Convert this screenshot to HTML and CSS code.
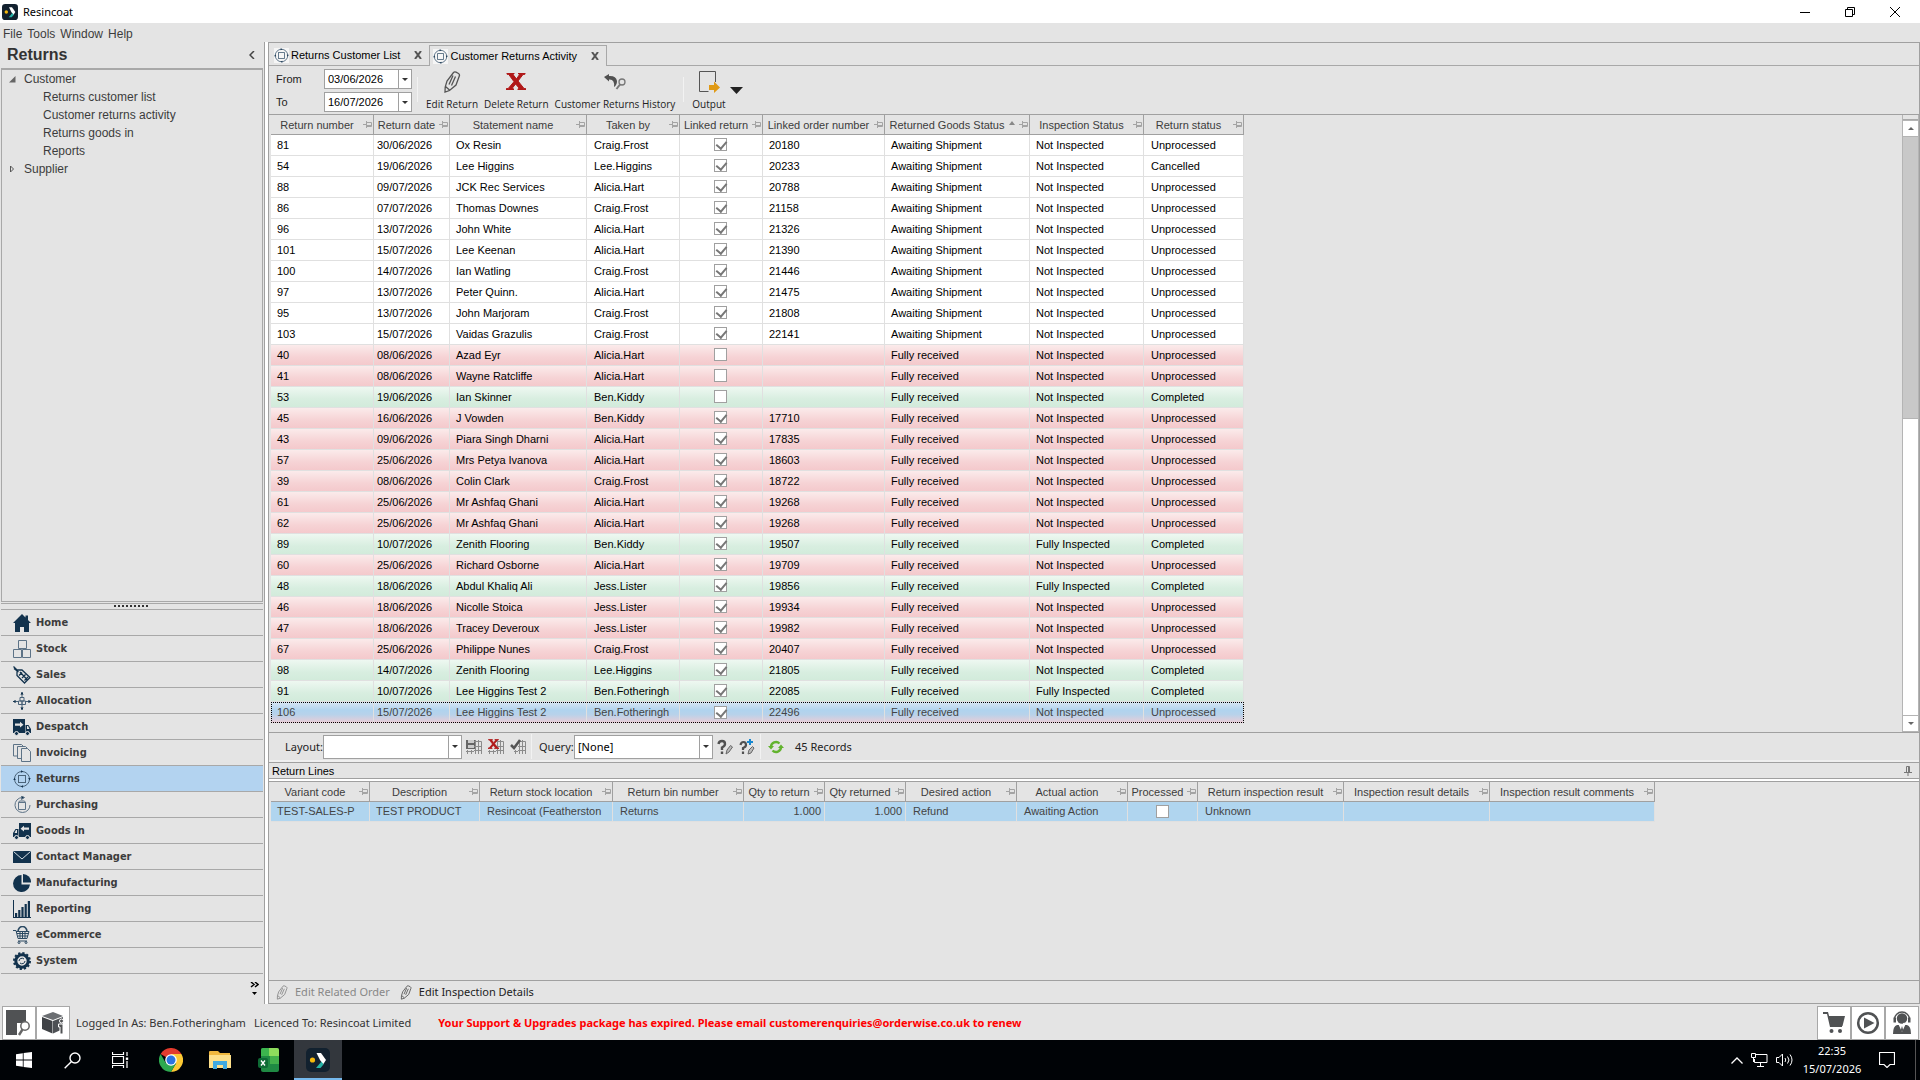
FILE: index.html
```html
<!DOCTYPE html>
<html lang="en">
<head>
<meta charset="utf-8">
<title>Resincoat</title>
<link rel="stylesheet" href="styles.css">
</head>
<body>
<svg class="sprite" aria-hidden="true">
  <symbol id="app" viewBox="0 0 24 24"><rect width="24" height="24" rx="5" fill="#12212f"/><circle cx="6.500" cy="12" r="2.600" fill="#f5b90c"/><path d="M10.500 5h4.500l5 7-3 4.500-3-4.500z" fill="#fff"/><path d="M15.500 13.500l2 3-3 3.500h-4.500z" fill="#26b4a8"/></symbol>
  <symbol id="pin" viewBox="0 0 9 7"><path d="M0 3.500h3M3.500 0v7M4 1.500h4.500v4H4M4 4.500h4.500" fill="none" stroke="#a4a4a4"/></symbol>
  <symbol id="returns" viewBox="0 0 18 18"><g fill="none" stroke="#4a6379"><circle cx="9" cy="9" r="7.500"/><rect x="5.500" y="5.500" width="7" height="7"/></g><path d="M8 .3l2.200 1.200L8 2.800zM10 17.700l-2.200-1.200L10 15.200zM.3 10l1.200-2.200L2.800 10zM17.700 8l-1.200 2.200L15.200 8z" fill="#12324d"/></symbol>
  <symbol id="pencil" viewBox="0 0 18 22"><path d="M10.500 1.500q1-1 2.500-.3l2.500 1.300q1.300.8.900 2.300L13 14 6.500 19.500 2 21l.2-5L4 10zM2.500 15.500l4 3.500M6 13.500l4-9M8.500 14.500l4-9" fill="none" stroke="currentColor" stroke-width="1.300"/></symbol>
  <symbol id="cross" viewBox="0 0 20 17"><path d="M1 0h7v1l-1.200.3L10.500 6l3.200-4.700L12.500 1V0H19v1.200l-2 .3-5 6.500 6 7.500 2 .3V17h-8v-1.200l1.500-.3L9.600 11 6 15.500l1.500.3V17H0v-1.200l2.200-.3L8 8.700 2.800 1.500 1 1.200z" fill="#b01818" stroke="#b01818"/></symbol>
  <symbol id="grid" viewBox="0 0 8 16"><path d="M0 2.500h7.500V15M1.500 1v14M4.500 1v14M0 7.500h7.500M0 11.500h7.500" stroke="#8b8b8b" fill="none"/></symbol>
</svg>

<header class="titlebar">
  <svg class="i16"><use href="#app"/></svg>
  <span class="grow">Resincoat</span>
  <button class="win" aria-label="Minimise"><svg width="10" height="10"><path d="M0 5.500h10" stroke="#000"/></svg></button>
  <button class="win" aria-label="Restore"><svg width="10" height="10"><path d="M.5 2.500h7v7h-7zM2.500 2V.5h7v7H8" stroke="#000" fill="none"/></svg></button>
  <button class="win" aria-label="Close"><svg width="10" height="10"><path d="M0 0l10 10M10 0L0 10" stroke="#000"/></svg></button>
</header>
<nav class="menubar"><a href="#">File</a><a href="#">Tools</a><a href="#">Window</a><a href="#">Help</a></nav>

<div class="workspace">
  <aside class="side">
    <div class="side-head"><h1>Returns</h1><button aria-label="Collapse panel"><svg width="6" height="8"><path d="M5 0L1 4l4 4" fill="none" stroke="#444" stroke-width="1.500"/></svg></button></div>
    <div class="tree">
      <a href="#" class="node"><svg width="7" height="7"><path d="M6.500 0v6.500H0z" fill="#666"/></svg>Customer</a>
      <a href="#" class="leaf">Returns customer list</a>
      <a href="#" class="leaf">Customer returns activity</a>
      <a href="#" class="leaf">Returns goods in</a>
      <a href="#" class="leaf">Reports</a>
      <a href="#" class="node"><svg width="7" height="8"><path d="M1.500 1l3 3-3 3z" fill="none" stroke="#555"/></svg>Supplier</a>
    </div>
    <div class="grip"><i></i></div>
    <nav class="modules">
      <a href="#"><svg viewBox="0 0 18 18" fill="#12324d"><path d="M9 0l3.500 3.500V1.500H15V6l3 3h-2v9h-5v-5H7v5H2V9H0z"/></svg>Home</a>
      <a href="#"><svg viewBox="0 0 18 18" fill="none" stroke="#5d7387"><path d="M5.500.5h8v8h-8zM.5 9.500h8v8h-8zM9.500 9.500h8v8h-8z"/></svg>Stock</a>
      <a href="#"><svg viewBox="0 0 18 18" fill="none" stroke="#12324d" stroke-width="1.300"><path d="M.5.500L4 4M4 4h5l8 7.500-5.500 5.500L4 9.500zM1 2.500L5.500 6M7 6l7 7.500M6 9.500l3-3M9 12l3.500-3.500M11.500 14.500l3.500-3.500"/></svg>Sales</a>
      <a href="#"><svg viewBox="0 0 18 18" fill="none" stroke="#4a6379"><path d="M9 0v5M9 13v5M0 9.500h5M13 9.500h5M7 5.500h4v3.500H7zM5.500 9h3.500v3.500H5.500zM9 9h3.500v3.500H9z"/><path d="M8 2.500l1-2 1 2M8 15.500l1 2 1-2M2.500 8.500l-2 1 2 1M15.500 8.500l2 1-2 1" fill="#12324d" stroke="#12324d"/></svg>Allocation</a>
      <a href="#"><svg viewBox="0 0 18 18"><path d="M0 1h12v14H0zM12.500 7h3l2.500 4v4h-5.500z" fill="#12324d"/><g fill="#12324d" stroke="#e4e4e4"><circle cx="3.500" cy="15.500" r="2"/><circle cx="14.500" cy="15.500" r="2"/></g><path d="M2 5.500h5V3.800L10.500 6.700 7 9.500V7.800H2zM14 8h1l1.500 3H14z" fill="#e4e4e4"/></svg>Despatch</a>
      <a href="#"><svg viewBox="0 0 18 18" fill="#e4e4e4" stroke="#5d7387"><path d="M.5.500h8l2 2V12H.5z"/><path d="M4.500 2.500h8l2 2V14.500h-10z"/><path d="M8.500 4.500h6l3 3v10h-9z"/></svg>Invoicing</a>
      <a href="#" class="on"><svg><use href="#returns"/></svg>Returns</a>
      <a href="#"><svg viewBox="0 0 18 18" fill="none" stroke="#5d7387"><path d="M9 1.500A7.500 7.500 0 1 0 17 9M5.500 6.500h7v7h-7zM5.500 6.500l1-1.500h5l1 1.500"/><path d="M8.500 0l3 1.500-3 2z" fill="#12324d"/></svg>Purchasing</a>
      <a href="#"><svg viewBox="0 0 18 18"><path d="M6 1h12v14H6zM5.500 7h-3L0 11v4h5.500z" fill="#12324d"/><g fill="#12324d" stroke="#e4e4e4"><circle cx="14.500" cy="15.500" r="2"/><circle cx="3.500" cy="15.500" r="2"/></g><path d="M16 5.500h-5V3.800L7.500 6.700 11 9.500V7.800h5zM4 8H3l-1.500 3H4z" fill="#e4e4e4"/></svg>Goods In</a>
      <a href="#"><svg viewBox="0 0 18 18"><path d="M0 3h18v12H0z" fill="#12324d"/><path d="M.5 3.500L9 11l8.500-7.500" fill="none" stroke="#d5dde3"/></svg>Contact Manager</a>
      <a href="#"><svg viewBox="0 0 18 18" fill="#12324d"><path d="M8.500 1A8.500 8.500 0 1 0 17 10.500H8.500z"/><path d="M10 0a8 8 0 0 1 8 8.500h-8z"/></svg>Manufacturing</a>
      <a href="#"><svg viewBox="0 0 18 18" fill="#12324d"><path d="M0 0h1v17h17v1H0zM2 13h2.200v4H2zM5.200 10h2.200v7H5.200zM8.400 7h2.200v10H8.400zM11.600 4h2.200v13h-2.200zM14.800 1H17v16h-2.200z"/></svg>Reporting</a>
      <a href="#"><svg viewBox="0 0 18 18" fill="none" stroke="#2c4a63"><path d="M0 4.500h3l2 8h9l2-7H3M4 7.500h11.500M4.500 10h10.500M7 5.500v7M9.500 5.500v7M12 5.500v7M5 15h9"/><path d="M5 5Q6 .5 9.500.500T14 5" stroke-width="1.600"/><circle cx="6" cy="16.500" r="1"/><circle cx="13" cy="16.500" r="1"/></svg>eCommerce</a>
      <a href="#"><svg viewBox="0 0 18 18" fill="none" stroke="#12324d"><circle cx="9" cy="9" r="6.200" stroke-width="3"/><circle cx="9" cy="9" r="8" stroke-width="2" stroke-dasharray="2.200 2"/><path d="M6 9a3 3 0 0 1 5-2M12 9a3 3 0 0 1-5 2"/></svg>System</a>
    </nav>
    <button class="more" aria-label="Configure buttons"><svg width="9" height="14"><path d="M1 0l3 2.500L1 5M5 0l3 2.500L5 5" fill="none" stroke="#000" stroke-width="1.500"/><path d="M2 10h5l-2.500 3z"/></svg></button>
  </aside>

  <main class="main">
    <div class="tabs">
      <div class="tab"><svg class="ticon"><use href="#returns" width="15" height="15"/></svg><a href="#">Returns Customer List</a><button aria-label="Close tab"><svg width="8" height="8"><path d="M1 0l6 8M7 0L1 8" stroke="#555" stroke-width="2"/></svg></button></div>
      <div class="tab active"><svg class="ticon"><use href="#returns" width="15" height="15"/></svg><a href="#">Customer Returns Activity</a><button aria-label="Close tab"><svg width="8" height="8"><path d="M1 0l6 8M7 0L1 8" stroke="#555" stroke-width="2"/></svg></button></div>
      <div class="tabfill"></div>
    </div>
    <div class="toolbar">
      <div class="dates">
        <label for="from">From</label><span class="combo"><input id="from" value="03/06/2026"><button aria-label="Pick from date"></button></span>
        <label for="to">To</label><span class="combo"><input id="to" value="16/07/2026"><button aria-label="Pick to date"></button></span>
      </div>
      <i class="sep"></i>
      <button class="tool"><svg width="18" height="22"><use href="#pencil"/></svg>Edit Return</button>
      <button class="tool"><svg width="20" height="22" viewBox="0 -2 20 22"><use href="#cross" width="20" height="17"/></svg>Delete Return</button>
      <button class="tool"><svg width="22" height="22" viewBox="0 0 22 22"><path d="M0 6l5-3v2q7-.5 8 5 0 4-3 6 1-8-5-7.500v2z" fill="#505050"/><circle cx="18" cy="11" r="3" fill="none" stroke="#777" stroke-width="1.300"/><path d="M16 13.500L12.500 18" stroke="#777" stroke-width="2"/></svg>Customer Returns History</button>
      <i class="sep"></i>
      <button class="tool"><svg width="22" height="22" viewBox="0 0 22 22"><path d="M17.500 11V.5h-16v20h9" fill="none" stroke="#555"/><path d="M11 14h5v-3.500l6 6L16 22v-3h-5z" fill="#e09a16"/></svg>Output</button>
      <button class="drop" aria-label="Output options"><svg width="13" height="7"><path d="M0 0h13L6.500 7z" fill="#222"/></svg></button>
    </div>

    <div class="gridwrap">
      <div class="gridbox">
      <table class="grid">
        <colgroup><col class="w103"><col class="w76"><col class="w137"><col class="w93"><col class="w83"><col class="w122"><col class="w145"><col class="w114"><col class="w100"></colgroup>
        <thead><tr>
          <th><div><span>Return number</span><svg><use href="#pin"/></svg></div></th><th><div><span>Return date</span><svg><use href="#pin"/></svg></div></th><th><div><span>Statement name</span><svg><use href="#pin"/></svg></div></th><th><div><span>Taken by</span><svg><use href="#pin"/></svg></div></th><th><div><span>Linked return</span><svg><use href="#pin"/></svg></div></th><th><div><span>Linked order number</span><svg><use href="#pin"/></svg></div></th><th><div><span>Returned Goods Status</span><i class="sort"></i><svg><use href="#pin"/></svg></div></th><th><div><span>Inspection Status</span><svg><use href="#pin"/></svg></div></th><th><div><span>Return status</span><svg><use href="#pin"/></svg></div></th>
        </tr></thead>
        <tbody>
          <tr><td>81<td>30/06/2026<td>Ox Resin<td>Craig.Frost<td><input type="checkbox" aria-label="Linked return" checked><td>20180<td>Awaiting Shipment<td>Not Inspected<td>Unprocessed</tr>
          <tr><td>54<td>19/06/2026<td>Lee Higgins<td>Lee.Higgins<td><input type="checkbox" aria-label="Linked return" checked><td>20233<td>Awaiting Shipment<td>Not Inspected<td>Cancelled</tr>
          <tr><td>88<td>09/07/2026<td>JCK Rec Services<td>Alicia.Hart<td><input type="checkbox" aria-label="Linked return" checked><td>20788<td>Awaiting Shipment<td>Not Inspected<td>Unprocessed</tr>
          <tr><td>86<td>07/07/2026<td>Thomas Downes<td>Craig.Frost<td><input type="checkbox" aria-label="Linked return" checked><td>21158<td>Awaiting Shipment<td>Not Inspected<td>Unprocessed</tr>
          <tr><td>96<td>13/07/2026<td>John White<td>Alicia.Hart<td><input type="checkbox" aria-label="Linked return" checked><td>21326<td>Awaiting Shipment<td>Not Inspected<td>Unprocessed</tr>
          <tr><td>101<td>15/07/2026<td>Lee Keenan<td>Alicia.Hart<td><input type="checkbox" aria-label="Linked return" checked><td>21390<td>Awaiting Shipment<td>Not Inspected<td>Unprocessed</tr>
          <tr><td>100<td>14/07/2026<td>Ian Watling<td>Craig.Frost<td><input type="checkbox" aria-label="Linked return" checked><td>21446<td>Awaiting Shipment<td>Not Inspected<td>Unprocessed</tr>
          <tr><td>97<td>13/07/2026<td>Peter Quinn.<td>Alicia.Hart<td><input type="checkbox" aria-label="Linked return" checked><td>21475<td>Awaiting Shipment<td>Not Inspected<td>Unprocessed</tr>
          <tr><td>95<td>13/07/2026<td>John Marjoram<td>Craig.Frost<td><input type="checkbox" aria-label="Linked return" checked><td>21808<td>Awaiting Shipment<td>Not Inspected<td>Unprocessed</tr>
          <tr><td>103<td>15/07/2026<td>Vaidas Grazulis<td>Craig.Frost<td><input type="checkbox" aria-label="Linked return" checked><td>22141<td>Awaiting Shipment<td>Not Inspected<td>Unprocessed</tr>
          <tr class="red"><td>40<td>08/06/2026<td>Azad Eyr<td>Alicia.Hart<td><input type="checkbox" aria-label="Linked return"><td><td>Fully received<td>Not Inspected<td>Unprocessed</tr>
          <tr class="red"><td>41<td>08/06/2026<td>Wayne Ratcliffe<td>Alicia.Hart<td><input type="checkbox" aria-label="Linked return"><td><td>Fully received<td>Not Inspected<td>Unprocessed</tr>
          <tr class="green"><td>53<td>19/06/2026<td>Ian Skinner<td>Ben.Kiddy<td><input type="checkbox" aria-label="Linked return"><td><td>Fully received<td>Not Inspected<td>Completed</tr>
          <tr class="red"><td>45<td>16/06/2026<td>J Vowden<td>Ben.Kiddy<td><input type="checkbox" aria-label="Linked return" checked><td>17710<td>Fully received<td>Not Inspected<td>Unprocessed</tr>
          <tr class="red"><td>43<td>09/06/2026<td>Piara Singh Dharni<td>Alicia.Hart<td><input type="checkbox" aria-label="Linked return" checked><td>17835<td>Fully received<td>Not Inspected<td>Unprocessed</tr>
          <tr class="red"><td>57<td>25/06/2026<td>Mrs Petya Ivanova<td>Alicia.Hart<td><input type="checkbox" aria-label="Linked return" checked><td>18603<td>Fully received<td>Not Inspected<td>Unprocessed</tr>
          <tr class="red"><td>39<td>08/06/2026<td>Colin Clark<td>Craig.Frost<td><input type="checkbox" aria-label="Linked return" checked><td>18722<td>Fully received<td>Not Inspected<td>Unprocessed</tr>
          <tr class="red"><td>61<td>25/06/2026<td>Mr Ashfaq Ghani<td>Alicia.Hart<td><input type="checkbox" aria-label="Linked return" checked><td>19268<td>Fully received<td>Not Inspected<td>Unprocessed</tr>
          <tr class="red"><td>62<td>25/06/2026<td>Mr Ashfaq Ghani<td>Alicia.Hart<td><input type="checkbox" aria-label="Linked return" checked><td>19268<td>Fully received<td>Not Inspected<td>Unprocessed</tr>
          <tr class="green"><td>89<td>10/07/2026<td>Zenith Flooring<td>Ben.Kiddy<td><input type="checkbox" aria-label="Linked return" checked><td>19507<td>Fully received<td>Fully Inspected<td>Completed</tr>
          <tr class="red"><td>60<td>25/06/2026<td>Richard Osborne<td>Alicia.Hart<td><input type="checkbox" aria-label="Linked return" checked><td>19709<td>Fully received<td>Not Inspected<td>Unprocessed</tr>
          <tr class="green"><td>48<td>18/06/2026<td>Abdul Khaliq Ali<td>Jess.Lister<td><input type="checkbox" aria-label="Linked return" checked><td>19856<td>Fully received<td>Fully Inspected<td>Completed</tr>
          <tr class="red"><td>46<td>18/06/2026<td>Nicolle Stoica<td>Jess.Lister<td><input type="checkbox" aria-label="Linked return" checked><td>19934<td>Fully received<td>Not Inspected<td>Unprocessed</tr>
          <tr class="red"><td>47<td>18/06/2026<td>Tracey Deveroux<td>Jess.Lister<td><input type="checkbox" aria-label="Linked return" checked><td>19982<td>Fully received<td>Not Inspected<td>Unprocessed</tr>
          <tr class="red"><td>67<td>25/06/2026<td>Philippe Nunes<td>Craig.Frost<td><input type="checkbox" aria-label="Linked return" checked><td>20407<td>Fully received<td>Not Inspected<td>Unprocessed</tr>
          <tr class="green"><td>98<td>14/07/2026<td>Zenith Flooring<td>Lee.Higgins<td><input type="checkbox" aria-label="Linked return" checked><td>21805<td>Fully received<td>Not Inspected<td>Completed</tr>
          <tr class="green"><td>91<td>10/07/2026<td>Lee Higgins Test 2<td>Ben.Fotheringh<td><input type="checkbox" aria-label="Linked return" checked><td>22085<td>Fully received<td>Fully Inspected<td>Completed</tr>
          <tr class="sel"><td>106<td>15/07/2026<td>Lee Higgins Test 2<td>Ben.Fotheringh<td><input type="checkbox" aria-label="Linked return" checked><td>22496<td>Fully received<td>Not Inspected<td>Unprocessed</tr>
        </tbody>
      </table>
      </div>
      <div class="scroll"><i class="split"></i><button class="up" aria-label="Scroll up"></button><i class="track"></i><i class="thumb"></i><button class="down" aria-label="Scroll down"></button></div>
    </div>

    <div class="layoutbar">
      <label for="layout">Layout:</label><span class="pick"><select id="layout"><option></option></select></span>
      <button class="mini" aria-label="Save layout"><svg width="16" height="16"><path d="M0 1h10v9H0z" fill="#666"/><path d="M2 1h6v3H2zM2 6h6v3H2z" fill="#ccc"/><use href="#grid" x="8" width="8" height="16"/><path d="M1.500 11v4M5.500 11v4M0 12.500h8" stroke="#8b8b8b"/></svg></button>
      <button class="mini" aria-label="Delete layout"><svg width="16" height="16"><use href="#grid" x="8" width="8" height="16"/><use href="#cross" width="11" height="10"/><path d="M1.500 11v4M5.500 11v4M0 12.500h8" stroke="#8b8b8b"/></svg></button>
      <button class="mini" aria-label="Apply layout"><svg width="16" height="16"><use href="#grid" x="8" width="8" height="16"/><path d="M1 6l3 3 6-8" fill="none" stroke="#555" stroke-width="2.500"/><path d="M5.500 11v4M4 12.500h4" stroke="#8b8b8b"/></svg></button>
      <i class="sep"></i>
      <label for="query">Query:</label><span class="pick"><select id="query"><option>[None]</option></select></span>
      <button class="mini" aria-label="Edit query"><svg width="16" height="16"><path d="M1.500 5Q2 2 5 2t3 3q0 2-3 3.500V11M5 12.500v2.500" fill="none" stroke="#505050" stroke-width="2.400"/><path d="M9 15l1-4 3.500-4.500 2 1.500-3.500 5z" fill="#bbb" stroke="#666"/></svg></button>
      <button class="mini" aria-label="New query"><svg width="16" height="16"><path d="M1.500 6Q2 3 4.500 3T7 6q0 2-3 3V11M4 12.500v2.500" fill="none" stroke="#505050" stroke-width="2.200"/><path d="M9 15l1-4 3.500-3.500 1.500 1.500-3 5z" fill="#bbb" stroke="#666"/><path d="M11 0v6M8 3h6" stroke="#1787cf" stroke-width="2"/></svg></button>
      <i class="sep"></i>
      <button class="mini" aria-label="Refresh"><svg width="16" height="16" fill="none" stroke="#62b32e" stroke-width="2.400"><path d="M3 8a5 5 0 0 1 8.500-3.500M13 8a5 5 0 0 1-8.500 3.500"/><path d="M0 7h6L3 10.500zM10 9h6l-3-3.500z" fill="#62b32e" stroke="none"/></svg></button>
      <span class="count">45 Records</span>
    </div>

    <div class="lineshead"><h2>Return Lines</h2><button aria-label="Pin panel"><svg width="8" height="10"><path d="M2.500 6V.5h3V6M0 6.500h8M4 7v3M4.500 1v5" fill="none" stroke="#777"/></svg></button></div>
    <section class="lines">
      <table class="grid lower">
        <colgroup><col class="w99"><col class="w110"><col class="w133"><col class="w131"><col class="w81"><col class="w81"><col class="w111"><col class="w111"><col class="w70"><col class="w146"><col class="w146"><col class="w165"></colgroup>
        <thead><tr>
          <th><div><span>Variant code</span><svg><use href="#pin"/></svg></div></th><th><div><span>Description</span><svg><use href="#pin"/></svg></div></th><th><div><span>Return stock location</span><svg><use href="#pin"/></svg></div></th><th><div><span>Return bin number</span><svg><use href="#pin"/></svg></div></th><th><div><span>Qty to return</span><svg><use href="#pin"/></svg></div></th><th><div><span>Qty returned</span><svg><use href="#pin"/></svg></div></th><th><div><span>Desired action</span><svg><use href="#pin"/></svg></div></th><th><div><span>Actual action</span><svg><use href="#pin"/></svg></div></th><th><div><span>Processed</span><svg><use href="#pin"/></svg></div></th><th><div><span>Return inspection result</span><svg><use href="#pin"/></svg></div></th><th><div><span>Inspection result details</span><svg><use href="#pin"/></svg></div></th><th><div><span>Inspection result comments</span><svg><use href="#pin"/></svg></div></th>
        </tr></thead>
        <tbody><tr><td>TEST-SALES-P<td>TEST PRODUCT<td>Resincoat (Featherston<td>Returns<td class="num">1.000<td class="num">1.000<td>Refund<td>Awaiting Action<td class="mid"><input type="checkbox" aria-label="Processed"><td>Unknown<td><td></tr></tbody>
      </table>
    </section>
    <div class="editbar">
      <button disabled><svg width="12" height="15"><use href="#pencil"/></svg>Edit Related Order</button>
      <button><svg width="12" height="15"><use href="#pencil"/></svg>Edit Inspection Details</button>
    </div>
  </main>
</div>

<footer class="status">
  <button aria-label="Search document"><svg width="26" height="26"><path d="M0 0h20v13h-9v12H0z" fill="#505254"/><circle cx="19" cy="16" r="4.200" fill="#fff" stroke="#666" stroke-width="1.500"/><path d="M16.500 19.500L13 25" stroke="#666" stroke-width="2.400"/></svg></button>
  <button aria-label="Product information"><svg width="26" height="26"><path d="M2 6L13 2l10 4-10 4z" fill="#6b6e72"/><path d="M2 7l10.500 4v12.500L2 19z" fill="#3f4246"/><path d="M13 11l10-4v12l-10 4.500z" fill="#4d5054"/><path d="M18.500 14h4.500v10h-3v-7h-1.500z" fill="#505254" stroke="#fff"/><circle cx="21.500" cy="11" r="2" fill="#505254" stroke="#fff"/></svg></button>
  <span class="who">Logged In As: Ben.Fotheringham</span><span class="lic">Licenced To: Resincoat Limited</span>
  <strong>Your Support &amp; Upgrades package has expired. Please email customerenquiries@orderwise.co.uk to renew</strong>
  <button aria-label="Shop"><svg width="24" height="24"><path d="M1 3h4l3 13h12v-2H9.500L6 1H1z" fill="#505254"/><path d="M6.500 5H23l-2.500 10H9z" fill="#505254"/><circle cx="9.500" cy="20" r="2" fill="#505254"/><circle cx="18" cy="20" r="2" fill="#505254"/></svg></button>
  <button aria-label="Videos"><svg width="24" height="24"><circle cx="12" cy="12" r="9.800" fill="none" stroke="#505254" stroke-width="2.500"/><path d="M8 6.500l10.500 5.500L8 17.500z" fill="#505254"/></svg></button>
  <button aria-label="Support"><svg width="24" height="24"><path d="M3 23q0-8 4-9h10q4 1 4 9z" fill="#505254"/><path d="M8.500 13.500h7L12 21z" fill="#fff"/><path d="M12 15l1.200 4L12 21l-1.200-2z" fill="#505254"/><circle cx="12" cy="7.500" r="5.200" fill="#505254"/><path d="M4.500 8.500a7.500 7.500 0 0 1 15 0" fill="none" stroke="#505254" stroke-width="1.400"/><path d="M3.500 6.500h2.500v5h-2.500zM18 6.500h2.500v5h-2.500z" fill="#505254"/><path d="M18 10.500q-1 2-5 2" fill="none" stroke="#fff"/></svg></button>
</footer>

<div class="taskbar">
  <button aria-label="Start"><svg width="16" height="16" fill="#fff"><path d="M0 2.200L6.800 1.200V7.600H0zM7.600 1.100L16 0v7.600H7.600zM0 8.400h6.800v6.400L0 13.800zM7.600 8.400H16V16l-8.400-1.100z"/></svg></button>
  <button aria-label="Search"><svg width="17" height="17" fill="none" stroke="#fff" stroke-width="1.400"><circle cx="11" cy="6" r="5"/><path d="M7.500 9.500L.7 16.300"/></svg></button>
  <button aria-label="Task view"><svg width="17" height="16" fill="none" stroke="#fff" stroke-width="1.200"><path d="M.5 0v2.500h11V0M.5 4.500h11v7H.5zM.5 16v-2.500h11V16M15 0v4M15 9v7"/><rect x="13.800" y="5.500" width="2.400" height="2.400" fill="#fff" stroke="none"/></svg></button>
  <button class="app first" aria-label="Chrome"><svg width="24" height="24"><path d="M12 12L1.600 6A12 12 0 0 1 22.400 6z" fill="#e33b2e"/><path d="M12 6h10.400A12 12 0 0 1 12 24l5.200-9z" fill="#fcc934"/><path d="M6.800 15L1.600 6A12 12 0 0 0 12 24l5.200-9z" fill="#2da94f"/><circle cx="12" cy="12" r="5.800" fill="#fff"/><circle cx="12" cy="12" r="4.500" fill="#2b73e0"/></svg></button>
  <button class="app" aria-label="File Explorer"><svg width="22" height="20"><path d="M0 2q0-1 1-1h8l2 2h10v14H0z" fill="#f0b83e"/><path d="M0 5h22v13H0z" fill="#fde08a"/><path d="M4 11h14v8h-4v-4H8v4H4z" fill="#3fa9e0"/></svg></button>
  <button class="app" aria-label="Excel"><svg width="22" height="24"><path d="M3 2q0-2 2-2h14q2 0 2 2v20q0 2-2 2H5q-2 0-2-2z" fill="#1f8a43"/><path d="M11 0h8q2 0 2 2v6H11z" fill="#8edc5c"/><path d="M3 2q0-2 2-2h6v8H3z" fill="#3cb54e"/><path d="M12 8h9v8h-9z" fill="#43b04b"/><rect y="10" width="10" height="10" rx="2" fill="#0e6b35"/><path d="M3 12.500l4 5M7 12.500l-4 5" stroke="#fff" stroke-width="1.300"/></svg></button>
  <button class="app current" aria-label="Resincoat"><svg width="24" height="24"><use href="#app"/></svg></button>
  <span class="grow"></span>
  <div class="tray">
    <button aria-label="Show hidden icons"><svg width="12" height="7"><path d="M.5 6.500L6 1l5.500 5.500" fill="none" stroke="#fff" stroke-width="1.300"/></svg></button>
    <button aria-label="Network"><svg width="17" height="14" fill="none" stroke="#fff"><path d="M5 1.500h11v8H3.500V6M9.500 10v3M6 13.500h7M.5.500h4v4h-4zM2.500 5v4"/></svg></button>
    <button aria-label="Volume"><svg width="18" height="14" fill="none" stroke="#fff"><path d="M.5 4.500h2.500L6.500 1v12L3 9.500H.5zM9 5q1.500 2 0 4M11.500 3.500q3 3.500 0 7M14 1.500q4 5.500 0 11"/></svg></button>
  </div>
  <time>22:35<br>15/07/2026</time>
  <button class="note" aria-label="Notifications"><svg width="16" height="16"><path d="M.5.500h15v12h-4.500L8 15.500 5 12.500H.5z" fill="none" stroke="#fff" stroke-width="1.200"/></svg></button>
  <i class="peek"></i>
</div>
</body>
</html>
```
FILE: styles.css
```css
* { box-sizing: border-box; }
body { margin: 0; min-height: 100vh; display: flex; flex-direction: column; background: #e4e4e4; color: #3c3c3c; font: 11px/14px "Liberation Sans", Arial, sans-serif; }
button { border: 0; padding: 0; margin: 0; background: none; font: inherit; color: inherit; display: flex; align-items: center; justify-content: center; }
a { color: inherit; text-decoration: none; }
h1, h2 { margin: 0; font-weight: normal; }
i { display: block; }
svg { flex: none; display: block; }
.sprite { width: 0; height: 0; position: absolute; }
.grow { flex: 1; }

.titlebar { height: 23px; background: #fff; color: #000; display: flex; align-items: center; gap: 5px; padding: 0 5px 0 2px; font: 11px/16px "Noto Sans", sans-serif; }
.i16 { width: 16px; height: 16px; }
.win { width: 40px; height: 20px; }
.menubar { height: 19px; display: flex; gap: 5px; padding: 4px 3px 0; font-size: 12px; }

.workspace { flex: 1; display: flex; }
.side { width: 265px; flex: none; padding: 0 1px; border-right: 1px solid #a0a0a0; display: flex; flex-direction: column; }
.side-head { height: 26px; display: flex; align-items: center; justify-content: space-between; padding: 0 8px 0 6px; }
.side-head h1 { font-size: 16px; font-weight: bold; color: #333; }
.tree { flex: 1; border: 1px solid #a8a8a8; border-top-width: 2px; font-size: 12px; line-height: 18px; }
.tree a { display: flex; align-items: center; }
.tree .node { padding-left: 7px; gap: 8px; }
.tree .leaf { padding-left: 41px; }
.grip { margin-top: 1px; height: 6px; border-top: 1px solid #a8a8a8; display: flex; justify-content: center; align-items: flex-start; padding-top: 1px; }
.grip i { width: 36px; height: 2px; background: repeating-linear-gradient(90deg, #333 0 2px, transparent 2px 4px); }
.modules { font: bold 11px/16px "DejaVu Sans Condensed", "DejaVu Sans", sans-serif; border-bottom: 1px solid #a8a8a8; }
.modules a { height: 26px; border-top: 1px solid #a8a8a8; display: flex; align-items: center; gap: 5px; padding-left: 12px; }
.modules a.on { background: #b3d3f0; }
.modules svg { width: 18px; height: 18px; }
.more { height: 30px; justify-content: flex-end; padding: 0 4px 0; }

.main { flex: 1; min-width: 0; margin-left: 3px; border: 1px solid #a0a0a0; box-shadow: -3px 0 #fff; display: flex; flex-direction: column; }
.tabs { height: 23px; display: flex; padding-top: 2px; color: #000; }
.tab { display: flex; align-items: center; gap: 2px; padding: 0 7px 0 5px; border-bottom: 1px solid #a8a8a8; }
.tab a { padding-right: 12px; white-space: nowrap; }
.tab.active { border: 1px solid #a8a8a8; border-bottom: 0; padding-left: 3px; }
.ticon { width: 15px; height: 15px; background: #f6f6f6; }
.tabfill { flex: 1; border-bottom: 1px solid #a8a8a8; }

.toolbar { height: 48px; display: flex; align-items: flex-start; padding: 3px 7px 0; color: #222; }
.dates { display: grid; grid-template-columns: 48px 88px; row-gap: 3px; align-items: center; }
.combo { display: flex; height: 20px; background: #fff; border: 1px solid #a0a0a0; }
.combo input { flex: 1; min-width: 0; border: 0; padding: 0 3px; font: inherit; color: #000; background: none; }
.combo button { width: 13px; border-left: 1px solid #a0a0a0; }
.combo button::after, .pick::after { content: ""; border: 3px solid transparent; border-top: 3px solid #333; border-bottom: 0; }
.sep { width: 1px; height: 25px; background: #f2f2f2; }
.toolbar .sep { margin: 8px 5px 0; }
.tool { flex-direction: column; gap: 4px; padding: 2px 3px 0; font: 10px/14px "Open Sans", "Noto Sans", sans-serif; color: #222; white-space: nowrap; }
.tool svg, .editbar svg { color: #555; }
.toolbar .drop { margin: 18px 0 0 1px; }

.gridwrap { display: flex; border-top: 1px solid #a0a0a0; border-bottom: 1px solid #a0a0a0; }
.gridbox { flex: 1; min-width: 0; padding: 0 0 9px 2px; }
.grid { border-collapse: separate; border-spacing: 0; table-layout: fixed; width: 973px; }
.w103 { width: 103px; } .w76 { width: 76px; } .w137 { width: 137px; } .w93 { width: 93px; } .w83 { width: 83px; } .w122 { width: 122px; } .w145 { width: 145px; } .w114 { width: 114px; } .w100 { width: 100px; }
.w99 { width: 99px; } .w110 { width: 110px; } .w133 { width: 133px; } .w131 { width: 131px; } .w81 { width: 81px; } .w111 { width: 111px; } .w70 { width: 70px; } .w146 { width: 146px; } .w165 { width: 165px; }
.grid th { height: 20px; padding: 0; font-weight: normal; border-right: 1px solid #a0a0a0; border-bottom: 1px solid #a0a0a0; white-space: nowrap; }
.grid th div { display: flex; align-items: center; padding-right: 1px; }
.grid th span { flex: 1; text-align: center; }
.grid th svg { width: 9px; height: 7px; }
.sort { border: 3px solid transparent; border-bottom: 4px solid #888; border-top: 0; margin: 0 4px 3px 0; }
.grid td { height: 21px; padding: 0 0 1px 6px; color: #000; background: #fff; border-right: 1px solid #e0e0e0; border-bottom: 1px solid #e0e0e0; white-space: nowrap; overflow: hidden; }
.grid td:nth-child(2) { padding-left: 3px; }
.grid td:nth-child(4), .grid td:nth-child(9) { padding-left: 7px; }
.grid:not(.lower) td:nth-child(5), .grid td.mid { padding: 0 1px 1px 0; text-align: center; }
.grid .red td { background: linear-gradient(#fbebeb, #f6d3d5 60%, #f4c9cc); }
.grid .green td { background: linear-gradient(#eef8f1, #d8eee0 60%, #d2ebdb); }
.grid .sel td { color: #444; background: linear-gradient(#d9e6f3, #b0d3ee 40%, #b8d2ea 60%, #eccdd5); border-bottom: 0; }
.grid .sel { outline: 1px dotted #000; outline-offset: -1px; }
.grid input { appearance: none; display: block; width: 13px; height: 13px; margin: 0 auto; border: 1px solid #a0a0a0; background: #fff; }
.grid input:checked::after { content: ""; display: block; width: 5px; height: 8px; margin: 0 0 0 3px; border: solid #777; border-width: 0 2px 2px 0; transform: rotate(40deg); }

.scroll { width: 17px; display: flex; flex-direction: column; background: #c8c8c8; border-left: 1px solid #b4b4b4; border-right: 1px solid #b4b4b4; }
.scroll .split { height: 5px; border-bottom: 1px solid #a8a8a8; background: #e4e4e4; }
.scroll button { height: 17px; background: #fff; border: solid #b4b4b4; border-width: 1px 0; }
.scroll button::after { content: ""; border: 3px solid transparent; }
.scroll .up::after { border-top: 0; border-bottom-color: #666; }
.scroll .down::after { border-bottom: 0; border-top-color: #666; }
.scroll .track { flex: 281; }
.scroll .thumb { flex: 296; background: #fff; border-top: 1px solid #b4b4b4; }

.layoutbar { height: 27px; display: flex; align-items: center; padding-left: 16px; font: 11px/16px "Noto Sans", sans-serif; color: #222; }
.layoutbar label { width: 38px; }
.pick { width: 139px; height: 24px; display: flex; align-items: center; border: 1px solid #a0a0a0; background: linear-gradient(90deg, #fff 124px, #a0a0a0 124px 125px, #fff 125px); padding-right: 3px; }
.pick select { appearance: none; flex: 1; border: 0; background: none; font: inherit; color: #000; padding: 0 3px; }
.mini { margin-left: 4px; width: 18px; height: 16px; }
.pick + .mini { margin-left: 3px; }
.layoutbar .sep { margin: 0 7px 0 4px; }
.layoutbar .sep + label { width: 35px; }
.layoutbar .sep + .mini { margin-left: -1px; }
.count { padding-left: 10px; }

.lineshead { margin-top: 2px; height: 17px; border: solid #a0a0a0; border-width: 1px 0; display: flex; align-items: center; justify-content: space-between; padding: 0 7px 0 3px; color: #000; box-shadow: 0 -2px #efefef, 0 2px #fff; }
.lineshead h2 { font-size: 11px; }
.lines { flex: 1; margin-top: 2px; border: solid #a0a0a0; border-width: 1px 0; padding-left: 2px; }
.lower { width: 1384px; }
.lower td { height: 20px; padding-left: 7px; color: #444; background: #b0d5ef; }
.lower td:first-child, .lower td:nth-child(2) { padding-left: 6px; }
.lower td.num { text-align: right; padding: 0 3px 1px 0; }
.editbar { height: 22px; display: flex; align-items: center; gap: 10px; padding-left: 7px; font: 11px/16px "Noto Sans", sans-serif; color: #222; }
.editbar button { gap: 7px; }
.editbar button:disabled, .editbar button:disabled svg { color: #888; }

.status { height: 36px; display: flex; align-items: center; padding: 1px 1px 0 2px; font: 11px/16px "Noto Sans", sans-serif; color: #333; white-space: nowrap; }
.status button { width: 34px; height: 34px; background: #fff; border: 1px solid #a8a8a8; }
.who { padding-left: 6px; }
.lic { padding: 0 27px 0 8px; }
.status strong { flex: 1; color: #f00; }

.taskbar { height: 40px; background: #000306; color: #fff; display: flex; align-items: stretch; }
.taskbar > button { width: 48px; }
.taskbar .app { margin-right: 1px; }
.taskbar .first { margin-left: 3px; }
.taskbar .current { background: #33373d; border-bottom: 2px solid #76b9ed; padding-top: 2px; }
.tray { display: flex; gap: 8px; align-items: center; }
time { width: 76px; text-align: center; font: 11px/18px "Noto Sans", sans-serif; padding-top: 2px; }
.taskbar .note { width: 34px; }
.peek { width: 5px; margin-left: 11px; border-left: 1px solid #555; }
```
